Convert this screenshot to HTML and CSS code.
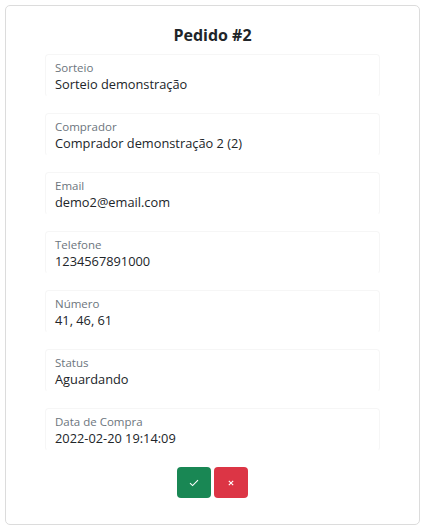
FILE: index.html
```html
<!DOCTYPE html>
<html lang="pt">
<head>
<meta charset="utf-8">
<link rel="stylesheet" href="styles.css">
</head>
<body>
<div class="card">
  <h1 class="title">Pedido #2</h1>
  <div class="fields">
    <div class="field"><div class="label">Sorteio</div><div class="value">Sorteio demonstração</div></div>
    <div class="field"><div class="label">Comprador</div><div class="value">Comprador demonstração 2 (2)</div></div>
    <div class="field"><div class="label">Email</div><div class="value">demo2@email.com</div></div>
    <div class="field"><div class="label">Telefone</div><div class="value">1234567891000</div></div>
    <div class="field"><div class="label">Número</div><div class="value">41, 46, 61</div></div>
    <div class="field"><div class="label">Status</div><div class="value">Aguardando</div></div>
    <div class="field"><div class="label">Data de Compra</div><div class="value">2022-02-20 19:14:09</div></div>
  </div>
  <div class="actions">
    <button class="btn btn-ok" aria-label="Aprovar">
      <svg width="10" height="8" viewBox="0 0 10 8"><path d="M1 4.2 L3.6 6.6 L9 1.2" fill="none" stroke="#fff" stroke-width="1.1"/></svg>
    </button>
    <button class="btn btn-no" aria-label="Rejeitar">
      <svg width="8" height="8" viewBox="0 0 8 8"><path d="M1.8 1.8 L6.2 6.2 M6.2 1.8 L1.8 6.2" fill="none" stroke="#fff" stroke-width="1.1"/></svg>
    </button>
  </div>
</div>
</body>
</html>
```
FILE: styles.css
```css
* { box-sizing: border-box; }
html, body { margin: 0; padding: 0; background: #fff; }
body {
  padding: 5px;
  font-family: "Open Sans", "Noto Sans", sans-serif;
  color: #212529;
}
.card {
  border: 1px solid #dcdcdc;
  border-radius: 5px;
  padding: 17px 39px 26px;
  min-height: 520px;
}
.title {
  margin: 0 0 7px;
  text-align: center;
  font-size: 16px;
  line-height: 24px;
  font-weight: 700;
  color: #212529;
}
.fields {
  display: flex;
  flex-direction: column;
  gap: 16px;
}
.field {
  height: 43px;
  border: 1px solid #f6f6f6;
  border-bottom-color: transparent;
  border-radius: 4px;
  padding: 5px 9px 0;
}
.label {
  font-size: 11.5px;
  line-height: 15px;
  color: #6c757d;
}
.value {
  font-size: 12.8px;
  line-height: 19px;
  color: #212529;
}
.actions {
  display: flex;
  justify-content: center;
  gap: 3px;
  margin-top: 16px;
}
.btn {
  width: 34px;
  height: 31px;
  border: none;
  border-radius: 4px;
  display: flex;
  align-items: center;
  justify-content: center;
  padding: 0;
}
.btn-ok { background: #198754; }
.btn-no { background: #dc3545; }
```
